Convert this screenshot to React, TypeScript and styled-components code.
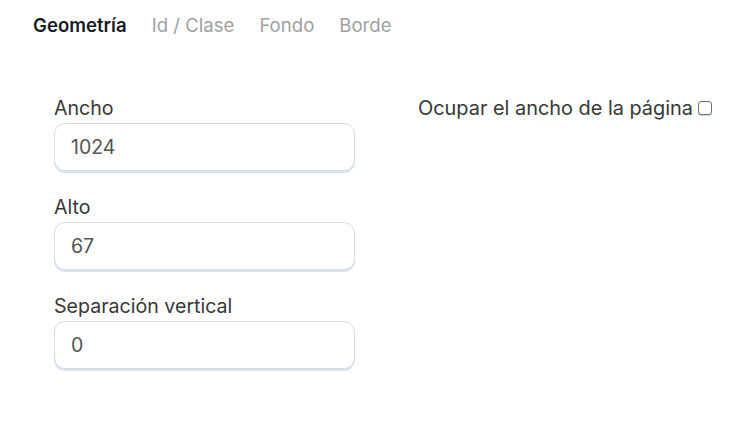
import * as React from "react";
import styled, { createGlobalStyle } from "styled-components";

const GlobalStyle = createGlobalStyle`
  html, body {
    margin: 0;
    padding: 0;
    background: #ffffff;
  }
  body {
    font-family: Inter, "Noto Sans", sans-serif;
    color: #333;
  }
`;

const Page = styled.div`
  width: 735px;
  height: 421px;
  box-sizing: border-box;
  padding: 12px 0 0 33px;
`;

const Tabs = styled.nav`
  display: flex;
  gap: 25px;
  height: 26px;
  align-items: center;
`;

const Tab = styled.button<{ $active?: boolean }>`
  background: none;
  border: none;
  padding: 0;
  font-family: inherit;
  font-size: 18.6px;
  font-weight: ${(p) => (p.$active ? 600 : 400)};
  color: ${(p) => (p.$active ? "#161b26" : "#a1a1a1")};
  cursor: pointer;
`;

const Body = styled.div`
  display: flex;
  gap: 63px;
  padding: 58px 0 0 21px;
`;

const Column = styled.div`
  display: flex;
  flex-direction: column;
  gap: 24px;
  width: 301px;
`;

const Field = styled.label`
  display: flex;
  flex-direction: column;
  gap: 3px;
`;

const Label = styled.span`
  font-size: 19.6px;
  line-height: 24px;
  color: #383838;
`;

const Input = styled.input`
  box-sizing: border-box;
  width: 301px;
  height: 48px;
  padding: 0 16px;
  border: 1px solid #d3deeb;
  border-radius: 11px;
  box-shadow: 0 2px 0 #dbe4ee;
  font-family: inherit;
  font-size: 19.5px;
  color: #555;
  outline: none;
  background: #fff;
`;

const CheckRow = styled.label`
  display: flex;
  align-items: center;
  gap: 5px;
  font-size: 19.9px;
  line-height: 24px;
  color: #383838;
`;

const Check = styled.input`
  appearance: none;
  margin: 0;
  width: 14px;
  height: 14px;
  border: 1px solid #6f6f6f;
  border-radius: 3px;
  background: #fff;
  box-shadow: 0 1px 0 #c6d6ea;
`;

const fields = [
  { label: "Ancho", value: "1024" },
  { label: "Alto", value: "67" },
  { label: "Separación vertical", value: "0" },
];

export default function App() {
  const [active, setActive] = React.useState("Geometría");
  return (
    <>
      <GlobalStyle />
      <Page>
        <Tabs>
          {["Geometría", "Id / Clase", "Fondo", "Borde"].map((t) => (
            <Tab key={t} $active={t === active} onClick={() => setActive(t)}>
              {t}
            </Tab>
          ))}
        </Tabs>
        <Body>
          <Column>
            {fields.map((f) => (
              <Field key={f.label}>
                <Label>{f.label}</Label>
                <Input defaultValue={f.value} />
              </Field>
            ))}
          </Column>
          <div>
            <CheckRow>
              Ocupar el ancho de la página
              <Check type="checkbox" />
            </CheckRow>
          </div>
        </Body>
      </Page>
    </>
  );
}
